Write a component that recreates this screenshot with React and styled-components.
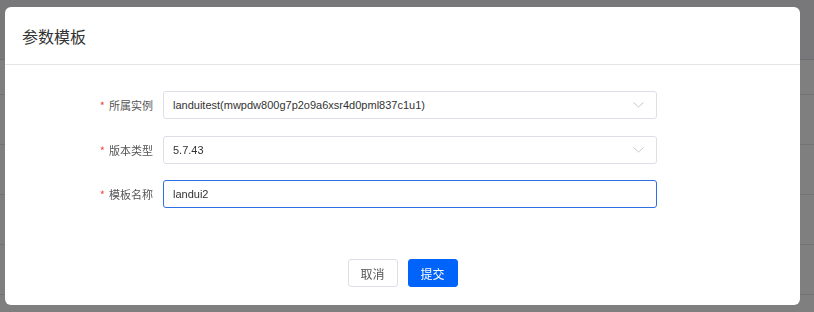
import React from 'react';
import styled, { createGlobalStyle } from 'styled-components';

const GlobalStyle = createGlobalStyle`
  html, body {
    margin: 0;
    padding: 0;
    width: 814px;
    height: 312px;
    overflow: hidden;
    background: #fff;
    font-family: "Liberation Sans", "Noto Sans CJK SC", sans-serif;
  }
`;

const Page = styled.div`
  width: 814px;
  height: 312px;
  overflow: hidden;
  background: #fff;
`;

const TableHead = styled.div`
  height: 59px;
  background: #f0f1f4;
  border-bottom: 1px solid #dcdde0;
`;

const Toolbar = styled.div`
  height: 34px;
  border-bottom: 1px solid #e6e6e6;
`;

const TableRow = styled.div`
  height: 49px;
  border-bottom: 1px solid #e6e6e6;
`;

const Overlay = styled.div`
  position: fixed;
  inset: 0;
  background: rgba(0, 0, 0, 0.5);
  display: flex;
  align-items: flex-start;
`;

const Dialog = styled.div`
  margin: 7px 0 0 5px;
  width: 795px;
  height: 298px;
  background: #fff;
  border-radius: 6px;
  display: flex;
  flex-direction: column;
`;

const Header = styled.div`
  height: 57px;
  border-bottom: 1px solid #e5e6e8;
  display: flex;
  align-items: center;
  padding: 0 17px;
  font-size: 16px;
  color: #333;
  font-family: "Noto Sans CJK SC", sans-serif;
`;

const Form = styled.div`
  padding: 26px 0 0 0;
  display: grid;
  grid-template-columns: 148px 494px;
  column-gap: 10px;
  row-gap: 16.5px;
  align-items: center;
`;

const Label = styled.label`
  text-align: right;
  font-size: 11px;
  color: #555;
  font-family: "Noto Sans CJK SC", sans-serif;
  &::before {
    content: '*';
    color: #f0483e;
    margin-right: 4px;
  }
`;

const Field = styled.div`
  box-sizing: border-box;
  height: 28px;
  border: 1px solid ${({ focused }) => (focused ? '#2f6fe4' : '#dcdfe6')};
  border-radius: 3px;
  display: flex;
  align-items: center;
  justify-content: space-between;
  padding: 0 12px 0 9px;
  font-size: 11px;
  color: #333;
`;

const Chevron = () => (
  <svg width="11" height="6" viewBox="0 0 11 6">
    <path d="M0.5 0.5 L5.5 5 L10.5 0.5" fill="none" stroke="#c4c6cc" strokeWidth="1" />
  </svg>
);

const Footer = styled.div`
  margin-top: auto;
  padding-bottom: 18px;
  display: flex;
  justify-content: center;
  gap: 10px;
`;

const Button = styled.button`
  box-sizing: border-box;
  width: 50px;
  height: 28px;
  border-radius: 3px;
  font-size: 12px;
  font-family: "Noto Sans CJK SC", sans-serif;
  cursor: pointer;
  border: 1px solid ${({ primary }) => (primary ? '#0064fa' : '#dcdfe6')};
  background: ${({ primary }) => (primary ? '#0064fa' : '#fff')};
  color: ${({ primary }) => (primary ? '#fff' : '#555')};
`;

const fields = [
  { label: '所属实例', value: 'landuitest(mwpdw800g7p2o9a6xsr4d0pml837c1u1)', select: true },
  { label: '版本类型', value: '5.7.43', select: true },
  { label: '模板名称', value: 'landui2', focused: true },
];

export default function App() {
  return (
    <Page>
      <GlobalStyle />
      <TableHead />
      <Toolbar />
      {[0, 1, 2, 3, 4].map((i) => <TableRow key={i} />)}
      <Overlay>
        <Dialog>
          <Header>参数模板</Header>
          <Form>
            {fields.map((f) => (
              <React.Fragment key={f.label}>
                <Label>{f.label}</Label>
                <Field focused={f.focused ? 1 : undefined}>
                  <span>{f.value}</span>
                  {f.select && <Chevron />}
                </Field>
              </React.Fragment>
            ))}
          </Form>
          <Footer>
            <Button>取消</Button>
            <Button primary={1}>提交</Button>
          </Footer>
        </Dialog>
      </Overlay>
    </Page>
  );
}
